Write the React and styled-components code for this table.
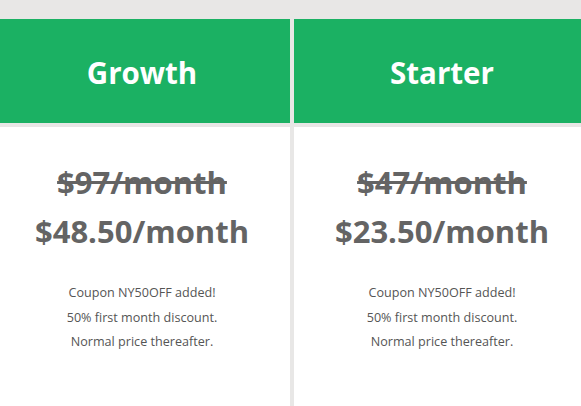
import React from 'react';
import styled, { createGlobalStyle } from 'styled-components';

const GlobalStyle = createGlobalStyle`
  html, body {
    margin: 0;
    padding: 0;
    background: #e8e7e6;
    font-family: "Open Sans", "Liberation Sans", sans-serif;
    overflow: hidden;
  }
`;

const plans = [
  { name: 'Growth', oldPrice: '$97/month', newPrice: '$48.50/month' },
  { name: 'Starter', oldPrice: '$47/month', newPrice: '$23.50/month' },
];

const App = () => {
  return (
    <>
      <GlobalStyle />
      <Page>
        <Grid>
          {plans.map((plan) => (
            <Column key={plan.name}>
              <Header>{plan.name}</Header>
              <Body>
                <OldPrice>{plan.oldPrice}</OldPrice>
                <NewPrice>{plan.newPrice}</NewPrice>
                <Notes>
                  <div>Coupon NY50OFF added!</div>
                  <div>50% first month discount.</div>
                  <div>Normal price thereafter.</div>
                </Notes>
              </Body>
            </Column>
          ))}
        </Grid>
      </Page>
    </>
  );
};

const Page = styled.div`
  padding-top: 19px;
  height: 406px;
  box-sizing: border-box;
  overflow: hidden;
`;

const Grid = styled.div`
  display: grid;
  grid-template-columns: 296px 296px;
  column-gap: 4px;
  margin-left: -6px;
  height: 100%;
`;

const Column = styled.div`
  display: flex;
  flex-direction: column;
  gap: 4px;
`;

const Header = styled.div`
  height: 104px;
  background: #1bb163;
  color: #fff;
  display: flex;
  align-items: center;
  justify-content: center;
  font-size: 29.5px;
  font-weight: 700;
  padding-top: 2px;
  box-sizing: border-box;
`;

const Body = styled.div`
  flex: 1;
  background: #fff;
  padding-top: 31px;
  text-align: center;
  color: #646464;
`;

const OldPrice = styled.div`
  font-size: 31px;
  font-weight: 700;
  line-height: 49px;
  text-decoration: line-through;
`;

const NewPrice = styled(OldPrice)`
  text-decoration: none;
`;

const Notes = styled.div`
  margin-top: 25px;
  font-size: 12.6px;
  line-height: 24.5px;
  color: #555;
`;

export default App;
